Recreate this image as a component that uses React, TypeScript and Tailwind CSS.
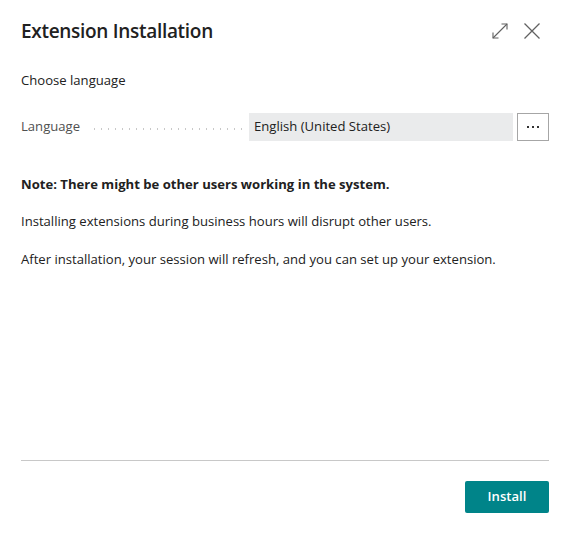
import React from "react";

export default function App() {
  return (
    <div
      className="w-[570px] h-[535px] bg-white flex flex-col text-[#212121]"
      style={{ fontFamily: '"Open Sans", "Noto Sans", sans-serif' }}
    >
      <div className="flex items-center justify-between pl-[21px] pr-[29px] pt-[10px] h-[52px]">
        <h1 className="text-[19px] font-semibold leading-[26px] tracking-[-0.3px]">Extension Installation</h1>
        <div className="flex items-center gap-[14px] text-[#616161]">
          <svg width="18" height="18" viewBox="0 0 18 18" fill="none" stroke="currentColor" strokeWidth="1.1">
            <path d="M2 16 L16 2" />
            <path d="M10.5 2 H16 V7.5" />
            <path d="M2 10.5 V16 H7.5" />
          </svg>
          <svg width="18" height="18" viewBox="0 0 18 18" fill="none" stroke="currentColor" strokeWidth="1.3">
            <path d="M1.5 1.5 L16.5 16.5 M16.5 1.5 L1.5 16.5" />
          </svg>
        </div>
      </div>

      <div className="px-[21px] pt-[18px]">
        <p className="text-[13.1px] leading-[20px]">Choose language</p>

        <div className="flex items-center mt-[23px] h-[28px]">
          <span className="text-[13.1px] text-[#505050] w-[70px] shrink-0">Language</span>
          <div className="w-[157px] shrink-0 h-[2px] mt-[4px] mr-[1px] bg-[radial-gradient(circle,#c8c8c8_0.8px,transparent_1px)] bg-[length:7px_2px]" />
          <div className="flex-1 h-[28px] bg-[#eaebec] flex items-center pl-[5px] text-[13.1px]">
            English (United States)
          </div>
          <button className="ml-[4px] w-[32px] h-[28px] border border-[#a6a6a6] flex items-center justify-center gap-[3px] bg-white">
            <span className="w-[2px] h-[2px] bg-[#333]" />
            <span className="w-[2px] h-[2px] bg-[#333]" />
            <span className="w-[2px] h-[2px] bg-[#333]" />
          </button>
        </div>

        <p className="mt-[33px] text-[13.1px] font-bold leading-[20px]">
          Note: There might be other users working in the system.
        </p>
        <p className="mt-[17px] text-[13.1px] leading-[20px]">
          Installing extensions during business hours will disrupt other users.
        </p>
        <p className="mt-[18px] text-[13.1px] leading-[20px]">
          After installation, your session will refresh, and you can set up your extension.
        </p>
      </div>

      <div className="flex-1" />

      <div className="mx-[21px] border-t border-[#c8c8c8]" />
      <div className="flex justify-end px-[21px] pt-[20px] pb-[22px]">
        <button className="w-[84px] h-[32px] bg-[#008489] text-white text-[13.1px] font-semibold rounded-[2px]">
          Install
        </button>
      </div>
    </div>
  );
}
